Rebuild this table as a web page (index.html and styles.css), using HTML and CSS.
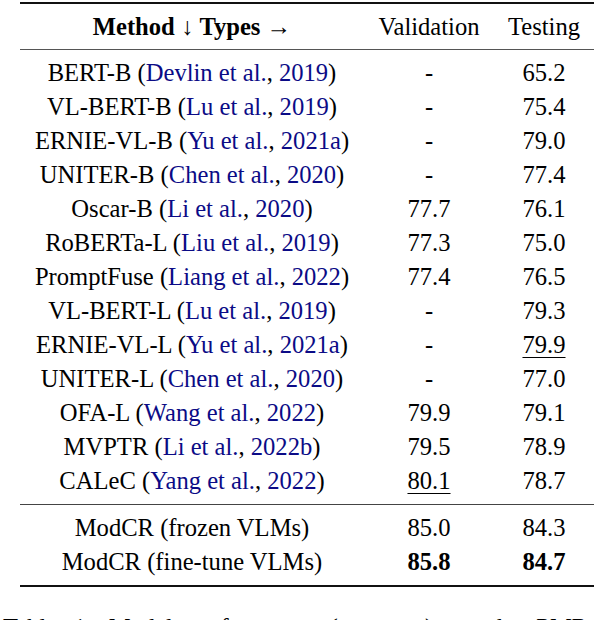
FILE: index.html
```html
<!DOCTYPE html>
<html>
<head>
<meta charset="utf-8">
<link rel="stylesheet" href="styles.css">
</head>
<body>
<div class="page">
<table class="results">
  <colgroup>
    <col class="c-method">
    <col class="c-val">
    <col class="c-test">
  </colgroup>
  <thead>
    <tr>
      <th class="method-head"><b>Method</b> <span class="arrow">↓</span> <b>Types</b> <span class="arrow">→</span></th>
      <th>Validation</th>
      <th>Testing</th>
    </tr>
  </thead>
  <tbody class="group">
    <tr class="first"><td>BERT-B (<a class="cite">Devlin et al.</a>, <a class="cite">2019</a>)</td><td>-</td><td>65.2</td></tr>
    <tr><td>VL-BERT-B (<a class="cite">Lu et al.</a>, <a class="cite">2019</a>)</td><td>-</td><td>75.4</td></tr>
    <tr><td>ERNIE-VL-B (<a class="cite">Yu et al.</a>, <a class="cite">2021a</a>)</td><td>-</td><td>79.0</td></tr>
    <tr><td>UNITER-B (<a class="cite">Chen et al.</a>, <a class="cite">2020</a>)</td><td>-</td><td>77.4</td></tr>
    <tr><td>Oscar-B (<a class="cite">Li et al.</a>, <a class="cite">2020</a>)</td><td>77.7</td><td>76.1</td></tr>
    <tr><td>RoBERTa-L (<a class="cite">Liu et al.</a>, <a class="cite">2019</a>)</td><td>77.3</td><td>75.0</td></tr>
    <tr><td>PromptFuse (<a class="cite">Liang et al.</a>, <a class="cite">2022</a>)</td><td>77.4</td><td>76.5</td></tr>
    <tr><td>VL-BERT-L (<a class="cite">Lu et al.</a>, <a class="cite">2019</a>)</td><td>-</td><td>79.3</td></tr>
    <tr><td>ERNIE-VL-L (<a class="cite">Yu et al.</a>, <a class="cite">2021a</a>)</td><td>-</td><td><span class="ul">79.9</span></td></tr>
    <tr><td>UNITER-L (<a class="cite">Chen et al.</a>, <a class="cite">2020</a>)</td><td>-</td><td>77.0</td></tr>
    <tr><td>OFA-L (<a class="cite">Wang et al.</a>, <a class="cite">2022</a>)</td><td>79.9</td><td>79.1</td></tr>
    <tr><td>MVPTR (<a class="cite">Li et al.</a>, <a class="cite">2022b</a>)</td><td>79.5</td><td>78.9</td></tr>
    <tr class="last"><td>CALeC (<a class="cite">Yang et al.</a>, <a class="cite">2022</a>)</td><td><span class="ul">80.1</span></td><td>78.7</td></tr>
  </tbody>
  <tbody class="group ours">
    <tr class="first"><td>ModCR (frozen VLMs)</td><td>85.0</td><td>84.3</td></tr>
    <tr class="last"><td>ModCR (fine-tune VLMs)</td><td><b>85.8</b></td><td><b>84.7</b></td></tr>
  </tbody>
</table>
<p class="caption">Table 1: Model performance (accuracy) on the PMR test set.</p>
</div>
</body>
</html>
```

FILE: styles.css
```css
html, body {
  margin: 0;
  padding: 0;
  background: #ffffff;
}

body {
  font-family: "Liberation Serif", "Times New Roman", serif;
  font-size: 24.6px;
  color: #000000;
}

.page {
  padding: 2px 8px 0 20px;
  overflow: hidden;
  height: 620px;
  box-sizing: border-box;
}

.results {
  width: 574px;
  border-collapse: collapse;
  border-top: 2px solid #111111;
  border-bottom: 2px solid #111111;
  table-layout: fixed;
}

.c-method { width: 344px; }
.c-val { width: 130px; }
.c-test { width: 100px; }

.results th,
.results td {
  padding: 0;
  text-align: center;
  white-space: nowrap;
  line-height: 34px;
  height: 34px;
}

.results tbody tr {
  height: 34px;
}

.results thead th {
  font-weight: normal;
  height: 45px;
  line-height: 44px;
  border-bottom: 1.5px solid #555555;
}

.method-head b {
  font-weight: bold;
}

.arrow {
  font-weight: normal;
}

.group tr.first td {
  padding-top: 6px;
}

.group tr.last td {
  padding-bottom: 6px;
}

.ours {
  border-top: 1.5px solid #444444;
}

.cite {
  color: #0b0b86;
  text-decoration: none;
}

.ul {
  text-decoration: underline;
  text-decoration-thickness: 1px;
  text-underline-offset: 4px;
}

.caption {
  margin: 27px 0 0 -17px;
  white-space: nowrap;
  line-height: 27px;
  word-spacing: 10px;
}
```
